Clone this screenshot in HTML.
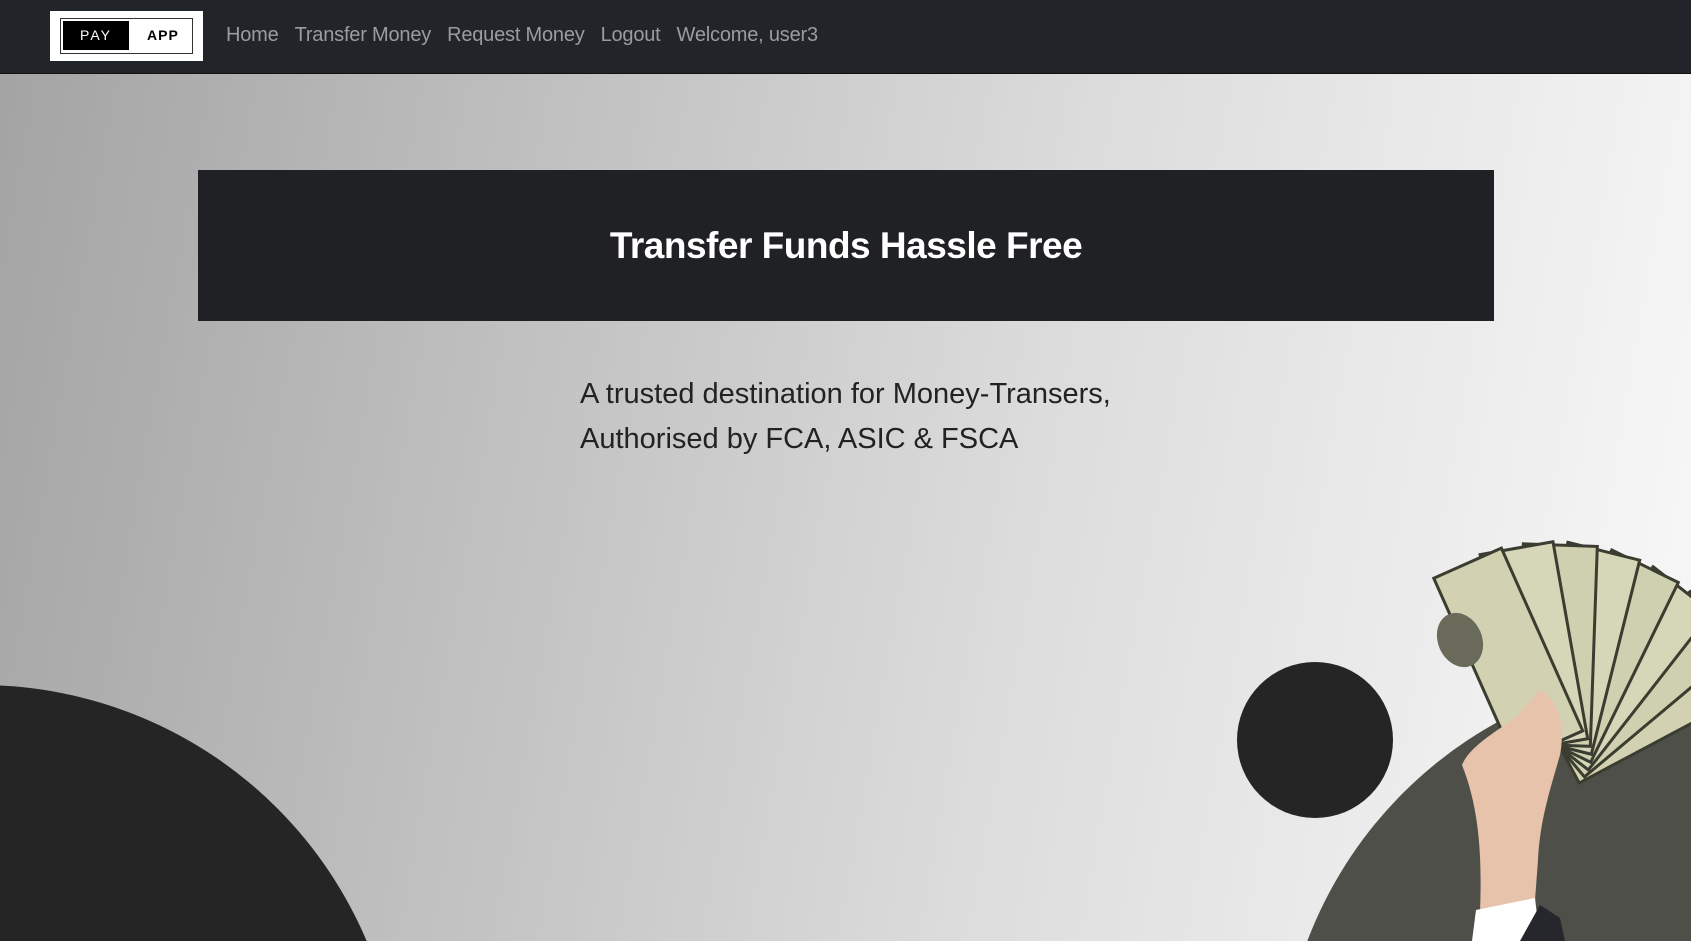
<!DOCTYPE html>
<html><head><meta charset="utf-8"><style>
*{margin:0;padding:0;box-sizing:border-box}
html,body{width:1691px;height:941px;overflow:hidden}
#w{position:relative;width:1691px;height:941px;overflow:hidden;font-family:"Liberation Sans",sans-serif;background:linear-gradient(100deg,#a3a3a3 0%,#c4c4c4 35%,#dcdcdc 60%,#f9f9f9 100%)}
nav{position:absolute;left:0;top:0;width:1691px;height:74px;background:#212529;border-bottom:1px solid #111}
.logo{position:absolute;left:50px;top:11px;width:153px;height:50px;background:#fff}
.logo .in{position:absolute;left:10px;top:7px;width:133px;height:36px;border:1.5px solid #333}
.logo .pay{position:absolute;left:2px;top:2px;width:66px;height:29px;background:#000;color:#fff;font-size:14px;letter-spacing:2px;text-align:center;line-height:29px}
.logo .app{position:absolute;left:86px;top:2px;line-height:29px;font-size:14px;font-weight:bold;color:#000;letter-spacing:1px}
.links{position:absolute;left:226px;top:24px;font-size:20px;color:#9a9c9f;white-space:nowrap;letter-spacing:-0.2px}
.links span{margin-right:16px}
.banner{position:absolute;left:198px;top:170px;width:1296px;height:151px;background:#1f2124;color:#fff;text-align:center;font-size:37px;font-weight:bold;line-height:151px;letter-spacing:-0.5px}
.p{position:absolute;left:580px;top:372px;font-size:29px;line-height:45px;color:#222}
.c{position:absolute;border-radius:50%}
</style></head><body><div id="w">
<nav>
<div class="logo"><div class="in"><div class="pay">PAY</div><div class="app">APP</div></div></div>
<div class="links"><span>Home</span><span>Transfer Money</span><span>Request Money</span><span>Logout</span><span>Welcome, user3</span></div>
</nav>
<div class="banner">Transfer Funds Hassle Free</div>
<div class="p">A trusted destination for Money-Transers,<br>Authorised by FCA, ASIC &amp; FSCA</div>
<div class="c" style="left:-440px;top:685px;width:840px;height:840px;background:#252525"></div>
<div class="c" style="left:1237px;top:662px;width:156px;height:156px;background:#252525"></div>
<div class="c" style="left:1280px;top:670px;width:840px;height:840px;background:#4f4f49"></div>
<svg style="position:absolute;left:1400px;top:540px" width="291" height="401" viewBox="0 0 291 401">
<g stroke="#3a3d30" stroke-width="3">
<rect x="-37" y="-210" width="74" height="200" fill="#d2d2b2" transform="translate(153 215) rotate(62)"/>
<rect x="-37" y="-210" width="74" height="200" fill="#cfd0b0" transform="translate(153 215) rotate(50)"/>
<rect x="-37" y="-210" width="74" height="200" fill="#d6d6b8" transform="translate(153 215) rotate(38)"/>
<rect x="-37" y="-210" width="74" height="200" fill="#cfd0b0" transform="translate(153 215) rotate(26)"/>
<rect x="-37" y="-210" width="74" height="200" fill="#d6d6b8" transform="translate(153 215) rotate(14)"/>
<rect x="-37" y="-210" width="74" height="200" fill="#cfd0b0" transform="translate(153 215) rotate(2)"/>
<rect x="-37" y="-210" width="74" height="200" fill="#d6d6b8" transform="translate(153 215) rotate(-10)"/>
<rect x="-37" y="-210" width="74" height="200" fill="#d2d2b2" transform="translate(153 215) rotate(-24)"/>
</g>
<ellipse cx="60" cy="100" rx="22" ry="28" fill="#6a6a5a" transform="rotate(-24 60 100)"/>
<path d="M62 225 C70 205 100 190 118 175 L140 150 C160 160 165 190 160 215 C150 250 140 280 138 320 L135 360 L80 372 C82 320 80 270 62 225Z" fill="#e6c3aa"/>
<path d="M72 401 L76 370 L135 358 L140 401Z" fill="#fff"/>
<path d="M120 401 L140 365 L160 378 L165 401Z" fill="#26272c"/>
</svg>
</div></body></html>
